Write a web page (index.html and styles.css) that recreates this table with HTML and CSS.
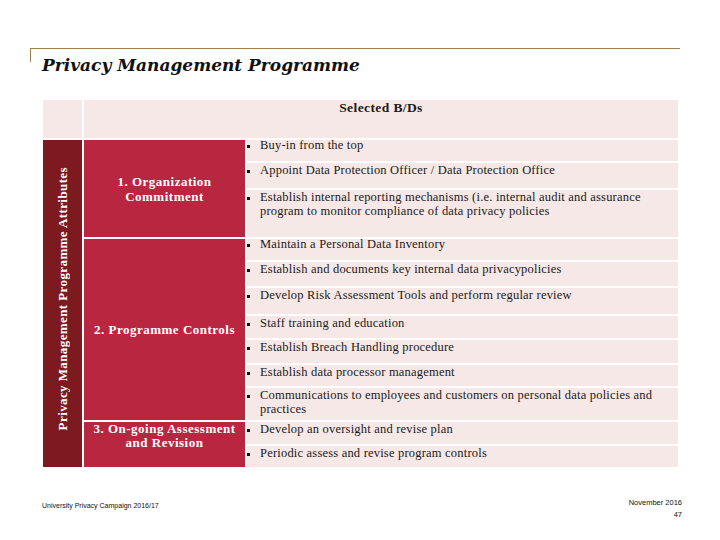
FILE: index.html
```html
<!DOCTYPE html>
<html>
<head>
<meta charset="utf-8">
<link rel="stylesheet" href="styles.css">
</head>
<body>
<div class="slide">
  <div class="header">
    <h1 class="title">Privacy Management Programme</h1>
  </div>
  <div class="table">
    <div class="head-blank"></div>
    <div class="head-main">Selected B/Ds</div>
    <div class="label"><span class="label-text">Privacy Management Programme Attributes</span></div>
    <div class="cat cat1">1. Organization<br>Commitment</div>
    <div class="cat cat2">2. Programme Controls</div>
    <div class="cat cat3">3. On-going Assessment<br>and Revision</div>
    <div class="item first"><span class="dot"></span><span class="txt">Buy-in from the top</span></div>
    <div class="item"><span class="dot"></span><span class="txt">Appoint Data Protection Officer / Data Protection Office</span></div>
    <div class="item"><span class="dot"></span><span class="txt">Establish internal reporting mechanisms (i.e. internal audit and assurance<br>program to monitor compliance of data privacy policies</span></div>
    <div class="item first"><span class="dot"></span><span class="txt">Maintain a Personal Data Inventory</span></div>
    <div class="item"><span class="dot"></span><span class="txt">Establish and documents key internal data privacypolicies</span></div>
    <div class="item"><span class="dot"></span><span class="txt">Develop Risk Assessment Tools and perform regular review</span></div>
    <div class="item"><span class="dot"></span><span class="txt">Staff training and education</span></div>
    <div class="item"><span class="dot"></span><span class="txt">Establish Breach Handling procedure</span></div>
    <div class="item"><span class="dot"></span><span class="txt">Establish data processor management</span></div>
    <div class="item"><span class="dot"></span><span class="txt">Communications to employees and customers on personal data policies and<br>practices</span></div>
    <div class="item"><span class="dot"></span><span class="txt">Develop an oversight and revise plan</span></div>
    <div class="item"><span class="dot"></span><span class="txt">Periodic assess and revise program controls</span></div>
  </div>
  <div class="footer">
    <div class="foot-left">University Privacy Campaign 2016/17</div>
    <div class="foot-right">
      <div>November 2016</div>
      <div>47</div>
    </div>
  </div>
</div>
</body>
</html>
```

FILE: styles.css
```css
* { box-sizing: border-box; }
html, body { margin: 0; padding: 0; background: #ffffff; }
body { font-family: "Liberation Serif", serif; color: #1a1a1a; }

.slide { width: 720px; height: 540px; padding-top: 48px; overflow: hidden; }

.header {
  margin: 0 40px 0 30px;
  border-top: 1px solid #a08052;
  background: linear-gradient(#a08052, #a08052) no-repeat 0 0 / 1px 13px;
}
.title {
  margin: 0;
  padding: 4px 0 0 12px;
  font-family: "DejaVu Serif", "Liberation Serif", serif;
  font-style: italic;
  font-weight: bold;
  font-size: 17px;
  line-height: 24px;
  color: #111;
}

.table {
  margin: 23px 0 0 43px;
  display: grid;
  grid-template-columns: 39px 161px 431px;
  grid-template-rows: 38px 21px 25px 47px 21px 24px 26px 22px 23px 21px 32px 22px 21px;
  column-gap: 2px;
  row-gap: 2px;
}
.head-blank { grid-row: 1; grid-column: 1; background: #f6e8e6; }
.head-main {
  grid-row: 1; grid-column: 2 / 4;
  background: #f6e8e6;
  text-align: center;
  font-weight: bold;
  font-size: 13.5px;
  line-height: 14px;
  padding-top: 1px;
  letter-spacing: 0.4px;
}

.label {
  grid-row: 2 / 14; grid-column: 1;
  background: #7c1a1f;
  display: flex;
  align-items: center;
  justify-content: center;
  padding-bottom: 10px;
}
.label-text {
  writing-mode: vertical-rl;
  transform: rotate(180deg);
  color: #fff;
  font-weight: bold;
  font-size: 13px;
  line-height: 16px;
  letter-spacing: 0.4px;
  white-space: nowrap;
}

.cat {
  grid-column: 2;
  background: #b9263f;
  color: #fff;
  font-weight: bold;
  font-size: 13px;
  letter-spacing: 0.5px;
  text-align: center;
  line-height: 15px;
}
.cat1 { grid-row: 2 / 5; display: flex; align-items: center; justify-content: center; }
.cat2 { grid-row: 5 / 12; display: flex; align-items: center; justify-content: center; }
.cat3 { grid-row: 12 / 14; padding-top: 0; line-height: 14px; }

.item {
  grid-column: 3;
  background: #f6e8e6;
  display: flex;
  align-items: flex-start;
  font-size: 12.5px;
  letter-spacing: 0.2px;
  line-height: 14px;
  padding-top: 0;
  color: #1a1a1a;
}
.item.first { line-height: 11px; }
.item.first .txt { line-height: 11px; }
.dot {
  flex: none;
  width: 3px;
  height: 3px;
  background: #111;
  margin: 7px 10px 0 0;
}
.item.first .dot { margin-top: 5px; }
.txt { white-space: nowrap; }

.footer {
  margin: 30px 38px 0 42px;
  display: flex;
  justify-content: space-between;
  align-items: flex-start;
  font-family: "Liberation Sans", Arial, sans-serif;
  color: #111;
}
.foot-left { font-size: 7px; line-height: 12px; padding-top: 3px; }
.foot-right { font-size: 7.5px; line-height: 12px; text-align: right; }
```
